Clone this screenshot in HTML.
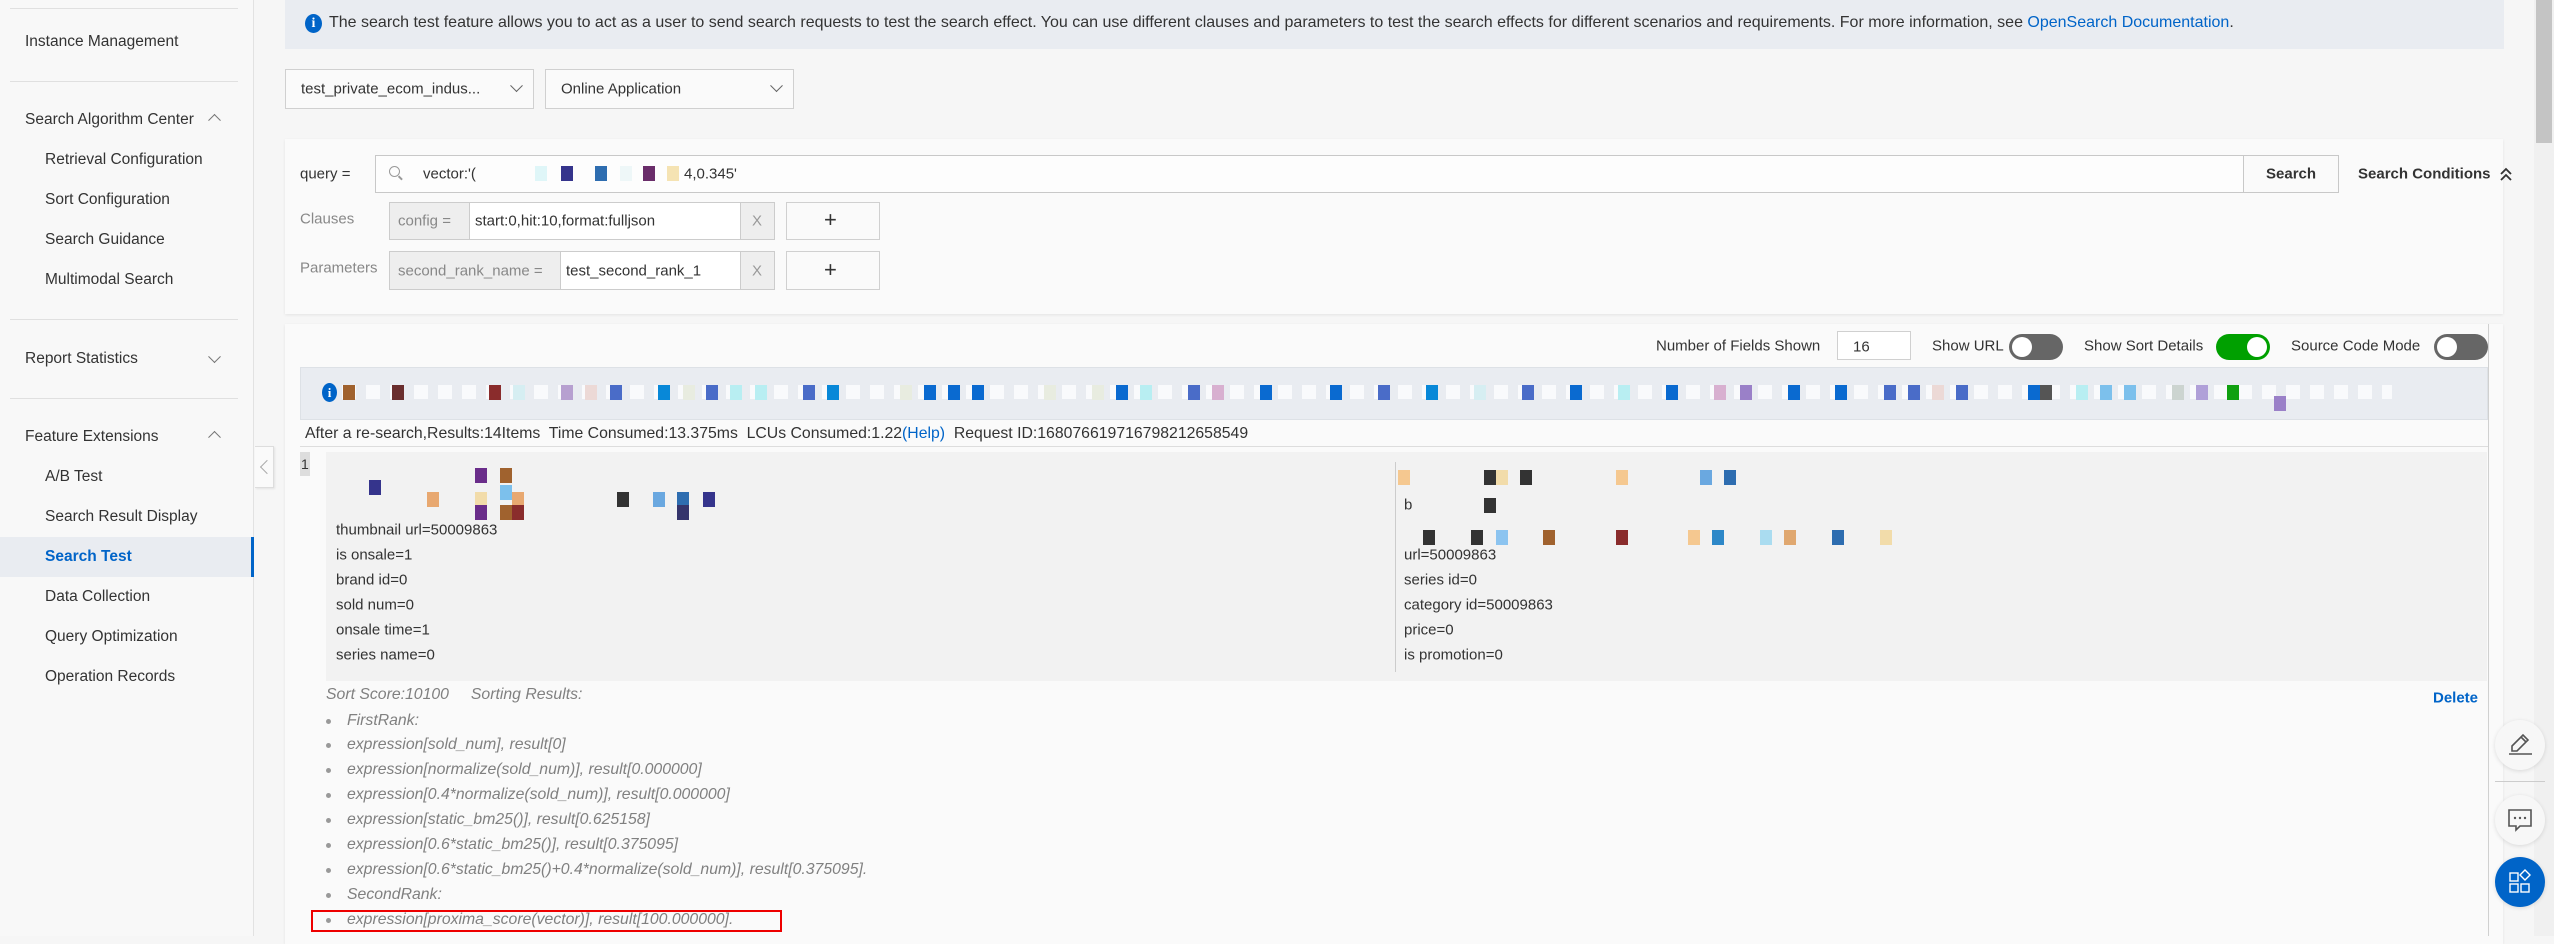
<!DOCTYPE html>
<html><head><meta charset="utf-8">
<style>
*{margin:0;padding:0;box-sizing:border-box}
body{width:2554px;height:936px;overflow:hidden;background:#f6f6f6;font-family:"Liberation Sans",sans-serif;font-size:15px;color:#333;position:relative}
.a{position:absolute;white-space:nowrap}
.side{position:absolute;left:0;top:0;width:254px;height:936px;background:#f8f8f8;border-right:1px solid #e2e2e2}
.side .t{position:absolute;left:25px;font-size:15.5px;color:#333;transform:translateY(-50%)}
.side .s{position:absolute;left:45px;font-size:15.5px;color:#333;transform:translateY(-50%)}
.side .hr{position:absolute;left:10px;width:228px;height:1px;background:#e0e0e0}
.chev{position:absolute;left:210px;width:9px;height:9px;border-left:1.5px solid #777;border-top:1.5px solid #777}
.up{transform:translateY(-25%) rotate(45deg)}
.dn{transform:translateY(-75%) rotate(225deg)}
.box{position:absolute;border:1px solid #d0d0d0;background:#fafafa}
.card{position:absolute;background:#fafafa;box-shadow:0 1px 3px rgba(0,0,0,.08)}
.vc{transform:translateY(-50%)}
.tg{position:absolute;width:54px;height:26px;border-radius:13px;background:#666}
.tg i{position:absolute;top:3px;width:20px;height:20px;border-radius:50%;background:#fff}
.px{position:absolute;width:12px;height:15px}
.it{position:absolute;left:347px;font-style:italic;color:#808080;font-size:15.8px;transform:translateY(-50%)}
.bul{position:absolute;left:326px;width:5px;height:5px;border-radius:50%;background:#999}
.fl{position:absolute;font-size:15px;color:#333;transform:translateY(-50%)}
.fab{position:absolute;left:2495px;width:50px;height:50px;border-radius:50%;background:#f7f7f7;box-shadow:0 1px 4px rgba(0,0,0,.12)}
</style></head><body>

<div class="side">
 <div class="hr" style="top:8px"></div>
 <div class="t" style="top:42px">Instance Management</div>
 <div class="hr" style="top:81px"></div>
 <div class="t" style="top:120px">Search Algorithm Center</div><div class="chev up" style="top:118px"></div>
 <div class="s" style="top:160px">Retrieval Configuration</div>
 <div class="s" style="top:200px">Sort Configuration</div>
 <div class="s" style="top:240px">Search Guidance</div>
 <div class="s" style="top:280px">Multimodal Search</div>
 <div class="hr" style="top:319px"></div>
 <div class="t" style="top:359px">Report Statistics</div><div class="chev dn" style="top:359px"></div>
 <div class="hr" style="top:398px"></div>
 <div class="t" style="top:437px">Feature Extensions</div><div class="chev up" style="top:435px"></div>
 <div class="s" style="top:477px">A/B Test</div>
 <div class="s" style="top:517px">Search Result Display</div>
 <div style="position:absolute;left:0;top:537px;width:254px;height:40px;background:#e9ecf1;border-right:3px solid #0064c8"></div>
 <div class="s" style="top:557px;color:#0064c8;font-weight:bold">Search Test</div>
 <div class="s" style="top:597px">Data Collection</div>
 <div class="s" style="top:637px">Query Optimization</div>
 <div class="s" style="top:677px">Operation Records</div>
</div>
<div style="position:absolute;left:255px;top:446px;width:19px;height:42px;background:#fafafa;border:1px solid #ddd;border-left:none;box-shadow:1px 1px 2px rgba(0,0,0,.08)"><div style="position:absolute;left:7px;top:15px;width:10px;height:10px;border-left:1.5px solid #aaa;border-bottom:1.5px solid #aaa;transform:rotate(45deg)"></div></div>

<!-- banner -->
<div style="position:absolute;left:285px;top:0;width:2219px;height:49px;background:#e9ecf1"></div>
<div class="a" style="left:305px;top:14px;width:17px;height:19px;border-radius:50%;background:#0064c8;color:#fff;font-weight:bold;font-size:14px;text-align:center;line-height:19px;font-family:'Liberation Serif',serif">i</div>
<div class="a vc" style="left:329px;top:23px;font-size:16px;color:#333">The search test feature allows you to act as a user to send search requests to test the search effect. You can use different clauses and parameters to test the search effects for different scenarios and requirements. For more information, see <span style="color:#0064c8">OpenSearch Documentation</span>.</div>

<!-- dropdowns -->
<div class="box" style="left:285px;top:69px;width:249px;height:40px"></div>
<div class="a vc" style="left:301px;top:89px">test_private_ecom_indus...</div>
<div class="chev dn" style="left:512px;top:88px;border-color:#666"></div>
<div class="box" style="left:545px;top:69px;width:249px;height:40px"></div>
<div class="a vc" style="left:561px;top:89px">Online Application</div>
<div class="chev dn" style="left:772px;top:88px;border-color:#666"></div>

<!-- search card -->
<div class="card" style="left:285px;top:139px;width:2218px;height:175px"></div>
<div class="a vc" style="left:300px;top:174px">query =</div>
<div class="box" style="left:375px;top:155px;width:1869px;height:38px;background:#fdfdfd;border-color:#c8c8c8"></div>
<div class="a" style="left:389px;top:166px;width:11px;height:11px;border:1.5px solid #999;border-radius:50%"></div>
<div class="a" style="left:398px;top:177px;width:5px;height:1.5px;background:#999;transform:rotate(45deg)"></div>
<div class="a vc" style="left:423px;top:174px">vector:'(</div>
<div class="px" style="left:535px;top:166px;background:#dff6f8"></div>
<div class="px" style="left:561px;top:166px;background:#35348c"></div>
<div class="px" style="left:595px;top:166px;background:#2e6db0"></div>
<div class="px" style="left:620px;top:166px;background:#eef7f8"></div>
<div class="px" style="left:643px;top:166px;background:#6a2d6a"></div>
<div class="px" style="left:667px;top:166px;background:#f5e3b3"></div>
<div class="a vc" style="left:684px;top:174px">4,0.345'</div>
<div class="box" style="left:2243px;top:155px;width:96px;height:38px;background:#fafafa;border-color:#c8c8c8"></div>
<div class="a vc" style="left:2266px;top:174px;font-weight:bold">Search</div>
<div class="a vc" style="left:2358px;top:174px;font-weight:bold">Search Conditions</div>
<svg class="a" style="left:2500px;top:166px" width="12" height="16" viewBox="0 0 12 16"><path d="M1 8 L6 3 L11 8 M1 14 L6 9 L11 14" fill="none" stroke="#333" stroke-width="1.8"/></svg>

<div class="a vc" style="left:300px;top:219px;color:#888">Clauses</div>
<div class="box" style="left:389px;top:202px;width:386px;height:38px;background:#fff;border-color:#ccc"></div>
<div class="a" style="left:390px;top:203px;width:80px;height:36px;background:#eee;border-right:1px solid #ccc"></div>
<div class="a" style="left:740px;top:203px;width:34px;height:36px;background:#eee;border-left:1px solid #ccc"></div>
<div class="a vc" style="left:398px;top:221px;color:#888">config =</div>
<div class="a vc" style="left:475px;top:221px">start:0,hit:10,format:fulljson</div>
<div class="a vc" style="left:752px;top:221px;color:#999">X</div>
<div class="box" style="left:786px;top:202px;width:94px;height:38px"></div>
<div class="a vc" style="left:824px;top:220px;font-size:22px">+</div>

<div class="a vc" style="left:300px;top:268px;color:#888">Parameters</div>
<div class="box" style="left:389px;top:251px;width:386px;height:39px;background:#fff;border-color:#ccc"></div>
<div class="a" style="left:390px;top:252px;width:171px;height:37px;background:#eee;border-right:1px solid #ccc"></div>
<div class="a" style="left:740px;top:252px;width:34px;height:37px;background:#eee;border-left:1px solid #ccc"></div>
<div class="a vc" style="left:398px;top:271px;color:#888">second_rank_name =</div>
<div class="a vc" style="left:566px;top:271px">test_second_rank_1</div>
<div class="a vc" style="left:752px;top:271px;color:#999">X</div>
<div class="box" style="left:786px;top:251px;width:94px;height:39px"></div>
<div class="a vc" style="left:824px;top:270px;font-size:22px">+</div>

<!-- results card -->
<div class="card" style="left:285px;top:324px;width:2218px;height:620px"></div>
<div class="a vc" style="left:1656px;top:346px">Number of Fields Shown</div>
<div class="box" style="left:1837px;top:331px;width:74px;height:29px;background:#fff"></div>
<div class="a vc" style="left:1853px;top:347px">16</div>
<div class="a vc" style="left:1932px;top:346px">Show URL</div>
<div class="tg" style="left:2009px;top:334px"><i style="left:3px"></i></div>
<div class="a vc" style="left:2084px;top:346px">Show Sort Details</div>
<div class="tg" style="left:2216px;top:334px;background:#00a000"><i style="left:31px"></i></div>
<div class="a vc" style="left:2291px;top:346px">Source Code Mode</div>
<div class="tg" style="left:2434px;top:334px"><i style="left:3px"></i></div>

<div style="position:absolute;left:300px;top:367px;width:2188px;height:53px;background:#e9ecf1;border:1px solid #dde1e6"></div>
<div class="a" style="left:322px;top:383px;width:15px;height:19px;border-radius:50%;background:#0064c8;color:#fff;font-weight:bold;font-size:13px;text-align:center;line-height:19px;font-family:'Liberation Serif',serif">i</div>
<div class="a" style="left:342px;top:385px;height:14px;width:2050px;background:repeating-linear-gradient(90deg,#f9fafc 0 14px,transparent 14px 24px)"></div>
<div class="px" style="left:343px;top:385px;background:#a0622e"></div>
<div class="px" style="left:392px;top:385px;background:#6a2e2e"></div>
<div class="px" style="left:489px;top:385px;background:#8a2c2c"></div>
<div class="px" style="left:513px;top:385px;background:#d6eef2"></div>
<div class="px" style="left:561px;top:385px;background:#b7a0d0"></div>
<div class="px" style="left:585px;top:385px;background:#ecd9d6"></div>
<div class="px" style="left:610px;top:385px;background:#4a6cc8"></div>
<div class="px" style="left:658px;top:385px;background:#0888d8"></div>
<div class="px" style="left:683px;top:385px;background:#e8ece0"></div>
<div class="px" style="left:706px;top:385px;background:#4a6cc8"></div>
<div class="px" style="left:730px;top:385px;background:#b8eef2"></div>
<div class="px" style="left:755px;top:385px;background:#b8eef2"></div>
<div class="px" style="left:803px;top:385px;background:#4a6cc8"></div>
<div class="px" style="left:827px;top:385px;background:#0888d8"></div>
<div class="px" style="left:900px;top:385px;background:#e8ece0"></div>
<div class="px" style="left:924px;top:385px;background:#0a6ad0"></div>
<div class="px" style="left:948px;top:385px;background:#0a6ad0"></div>
<div class="px" style="left:972px;top:385px;background:#0a6ad0"></div>
<div class="px" style="left:1044px;top:385px;background:#e8ece0"></div>
<div class="px" style="left:1092px;top:385px;background:#e8ece0"></div>
<div class="px" style="left:1116px;top:385px;background:#0a6ad0"></div>
<div class="px" style="left:1140px;top:385px;background:#b8eef2"></div>
<div class="px" style="left:1188px;top:385px;background:#4a6cc8"></div>
<div class="px" style="left:1212px;top:385px;background:#d8b0d0"></div>
<div class="px" style="left:1260px;top:385px;background:#0a6ad0"></div>
<div class="px" style="left:1330px;top:385px;background:#0a6ad0"></div>
<div class="px" style="left:1378px;top:385px;background:#4a6cc8"></div>
<div class="px" style="left:1426px;top:385px;background:#0888d8"></div>
<div class="px" style="left:1474px;top:385px;background:#d6eef2"></div>
<div class="px" style="left:1522px;top:385px;background:#4a6cc8"></div>
<div class="px" style="left:1570px;top:385px;background:#0a6ad0"></div>
<div class="px" style="left:1618px;top:385px;background:#b8eef2"></div>
<div class="px" style="left:1666px;top:385px;background:#0a6ad0"></div>
<div class="px" style="left:1714px;top:385px;background:#d8b0d0"></div>
<div class="px" style="left:1740px;top:385px;background:#9a80c8"></div>
<div class="px" style="left:1788px;top:385px;background:#0a6ad0"></div>
<div class="px" style="left:1835px;top:385px;background:#0a6ad0"></div>
<div class="px" style="left:1884px;top:385px;background:#4a6cc8"></div>
<div class="px" style="left:1908px;top:385px;background:#4a6cc8"></div>
<div class="px" style="left:1932px;top:385px;background:#ecd9d6"></div>
<div class="px" style="left:1956px;top:385px;background:#4a6cc8"></div>
<div class="px" style="left:2028px;top:385px;background:#0a6ad0"></div>
<div class="px" style="left:2040px;top:385px;background:#555"></div>
<div class="px" style="left:2076px;top:385px;background:#b8eef2"></div>
<div class="px" style="left:2100px;top:385px;background:#7cc0ec"></div>
<div class="px" style="left:2124px;top:385px;background:#7cc0ec"></div>
<div class="px" style="left:2172px;top:385px;background:#ccd4d0"></div>
<div class="px" style="left:2196px;top:385px;background:#b0a0d8"></div>
<div class="px" style="left:2227px;top:385px;background:#10a010"></div>
<div class="px" style="left:2274px;top:396px;background:#9a80c8"></div>

<div class="a vc" style="left:305px;top:434px;font-size:15.8px">After a re-search,Results:14Items&nbsp; Time Consumed:13.375ms&nbsp; LCUs Consumed:1.22<span style="color:#0064c8">(Help)</span>&nbsp; Request ID:168076619716798212658549</div>
<div class="a" style="left:300px;top:446px;width:2188px;height:1px;background:#ddd"></div>
<div class="a" style="left:300px;top:452px;width:10px;height:24px;background:#ddd;font-size:14px;line-height:24px;padding-left:1px">1</div>
<div class="a" style="left:326px;top:452px;width:2161px;height:229px;background:#f2f2f2"></div>
<div class="a" style="left:1395px;top:462px;width:1px;height:210px;background:#ccc"></div>
<div class="px" style="left:369px;top:480px;background:#35348c"></div>
<div class="px" style="left:475px;top:468px;background:#6a2d8a"></div>
<div class="px" style="left:500px;top:468px;background:#a0622e"></div>
<div class="px" style="left:500px;top:485px;background:#7cc0ec"></div>
<div class="px" style="left:427px;top:492px;background:#e8a870"></div>
<div class="px" style="left:475px;top:492px;background:#f2dcaa"></div>
<div class="px" style="left:512px;top:492px;background:#e8a870"></div>
<div class="px" style="left:617px;top:492px;background:#333"></div>
<div class="px" style="left:653px;top:492px;background:#6aa8e0"></div>
<div class="px" style="left:677px;top:492px;background:#2e6db0"></div>
<div class="px" style="left:703px;top:492px;background:#35348c"></div>
<div class="px" style="left:475px;top:505px;background:#6a2d8a"></div>
<div class="px" style="left:500px;top:505px;background:#a0622e"></div>
<div class="px" style="left:512px;top:505px;background:#8a2c2c"></div>
<div class="px" style="left:677px;top:505px;background:#35346c"></div>
<div class="fl" style="left:336px;top:530px">thumbnail url=50009863</div>
<div class="fl" style="left:336px;top:555px">is onsale=1</div>
<div class="fl" style="left:336px;top:580px">brand id=0</div>
<div class="fl" style="left:336px;top:605px">sold num=0</div>
<div class="fl" style="left:336px;top:630px">onsale time=1</div>
<div class="fl" style="left:336px;top:655px">series name=0</div>
<div class="px" style="left:1398px;top:470px;background:#f5c890"></div>
<div class="px" style="left:1484px;top:470px;background:#333"></div>
<div class="px" style="left:1496px;top:470px;background:#f2dcaa"></div>
<div class="px" style="left:1520px;top:470px;background:#333"></div>
<div class="px" style="left:1616px;top:470px;background:#f5c890"></div>
<div class="px" style="left:1700px;top:470px;background:#6aa8e0"></div>
<div class="px" style="left:1724px;top:470px;background:#2e6db0"></div>
<div class="fl" style="left:1404px;top:505px">b</div>
<div class="px" style="left:1484px;top:498px;background:#333"></div>
<div class="px" style="left:1423px;top:530px;background:#333"></div>
<div class="px" style="left:1471px;top:530px;background:#333"></div>
<div class="px" style="left:1496px;top:530px;background:#8cc4f0"></div>
<div class="px" style="left:1543px;top:530px;background:#a0622e"></div>
<div class="px" style="left:1616px;top:530px;background:#8a2c2c"></div>
<div class="px" style="left:1688px;top:530px;background:#f5c890"></div>
<div class="px" style="left:1712px;top:530px;background:#2e88c8"></div>
<div class="px" style="left:1760px;top:530px;background:#aadcf0"></div>
<div class="px" style="left:1784px;top:530px;background:#e0a870"></div>
<div class="px" style="left:1832px;top:530px;background:#2e6db0"></div>
<div class="px" style="left:1880px;top:530px;background:#f2dcaa"></div>
<div class="fl" style="left:1404px;top:555px">url=50009863</div>
<div class="fl" style="left:1404px;top:580px">series id=0</div>
<div class="fl" style="left:1404px;top:605px">category id=50009863</div>
<div class="fl" style="left:1404px;top:630px">price=0</div>
<div class="fl" style="left:1404px;top:655px">is promotion=0</div>

<div class="it" style="left:326px;top:695px">Sort Score:10100 &nbsp;&nbsp;&nbsp; Sorting Results:</div>
<div class="a vc" style="left:2433px;top:698px;color:#0064c8;font-weight:bold">Delete</div>
<div class="bul" style="top:719px"></div><div class="it" style="top:721px">FirstRank:</div>
<div class="bul" style="top:743px"></div><div class="it" style="top:745px">expression[sold_num], result[0]</div>
<div class="bul" style="top:768px"></div><div class="it" style="top:770px">expression[normalize(sold_num)], result[0.000000]</div>
<div class="bul" style="top:793px"></div><div class="it" style="top:795px">expression[0.4*normalize(sold_num)], result[0.000000]</div>
<div class="bul" style="top:818px"></div><div class="it" style="top:820px">expression[static_bm25()], result[0.625158]</div>
<div class="bul" style="top:843px"></div><div class="it" style="top:845px">expression[0.6*static_bm25()], result[0.375095]</div>
<div class="bul" style="top:868px"></div><div class="it" style="top:870px">expression[0.6*static_bm25()+0.4*normalize(sold_num)], result[0.375095].</div>
<div class="bul" style="top:893px"></div><div class="it" style="top:895px">SecondRank:</div>
<div class="bul" style="top:918px"></div><div class="it" style="top:920px">expression[proxima_score(vector)], result[100.000000].</div>
<div class="a" style="left:311px;top:910px;width:471px;height:22px;border:2px solid #e00"></div>

<!-- right strip & scrollbar -->
<div class="a" style="left:2488px;top:324px;width:1px;height:612px;background:#d0d0d0"></div>
<div class="a" style="left:2534px;top:0;width:20px;height:936px;background:#f0f0f0"></div>
<div class="a" style="left:2536px;top:0;width:16px;height:143px;background:#c4c4c4"></div>
<div class="fab" style="top:720px"><svg width="50" height="50" viewBox="0 0 50 50"><path d="M17 31 L17 26 L28 15 L33 20 L22 31 Z M26 17 L31 22" fill="none" stroke="#555" stroke-width="1.6"/><path d="M14 34 H37" stroke="#555" stroke-width="1.6"/></svg></div>
<div class="a" style="left:2495px;top:781px;width:50px;height:1px;background:#ccc"></div>
<div class="fab" style="top:795px"><svg width="50" height="50" viewBox="0 0 50 50"><path d="M14 15 H36 V31 H25 L21 35 V31 H14 Z" fill="none" stroke="#555" stroke-width="1.6"/><circle cx="20" cy="23" r="1.2" fill="#555"/><circle cx="25" cy="23" r="1.2" fill="#555"/><circle cx="30" cy="23" r="1.2" fill="#555"/></svg></div>
<div class="fab" style="top:857px;background:#0064c8"><svg width="50" height="50" viewBox="0 0 50 50"><g fill="none" stroke="#fff" stroke-width="1.4"><rect x="15" y="16" width="8" height="8"/><rect x="15" y="27" width="8" height="8"/><rect x="26" y="27" width="8" height="8"/><path d="M30 13 L35 18 L30 23 L25 18 Z"/></g></svg></div>
</body></html>
